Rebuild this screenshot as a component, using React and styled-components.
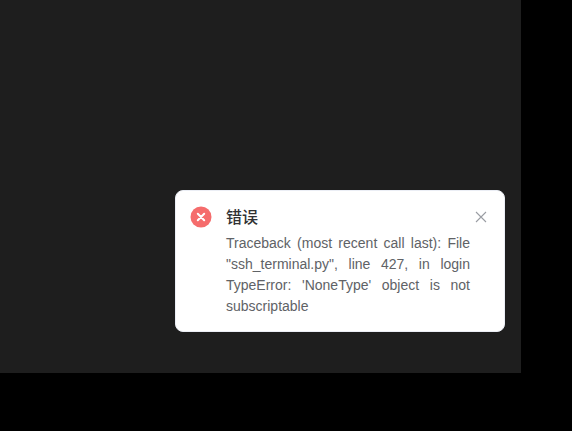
import React from "react";
import styled, { createGlobalStyle } from "styled-components";

const Global = createGlobalStyle`
  html, body { margin: 0; padding: 0; background: #000; }
  #root { width: 572px; height: 431px; overflow: hidden; }
`;

const Panel = styled.main`
  box-sizing: border-box;
  width: 521px;
  height: 373px;
  background: #1e1e1e;
  display: flex;
  justify-content: flex-end;
  align-items: flex-end;
  padding: 0 16px 41px 0;
`;

const Notification = styled.section`
  position: relative;
  box-sizing: border-box;
  width: 330px;
  height: 142px;
  display: flex;
  padding: 14px 26px 14px 13px;
  background: #fff;
  border: 1px solid #ebeef5;
  border-radius: 8px;
  font-family: "Liberation Sans", Arial, "Noto Sans CJK SC", sans-serif;
`;

const IconSlot = styled.div`
  flex: none;
  width: 24px;
  height: 24px;
  display: flex;
  align-items: center;
  justify-content: center;
`;

const Group = styled.div`
  flex: 1;
  min-width: 0;
  margin: 0 8px 0 13px;
`;

const Title = styled.h2`
  margin: 0;
  font-size: 16px;
  font-weight: 500;
  line-height: 22px;
  color: #303133;
  font-family: "Noto Sans CJK SC", sans-serif;
`;

const Message = styled.p`
  margin: 6px 0 0;
  font-size: 14px;
  line-height: 21px;
  color: #606266;
  text-align: justify;
`;

const Close = styled.button`
  position: absolute;
  top: 20px;
  right: 17px;
  width: 12px;
  height: 12px;
  padding: 0;
  border: 0;
  background: none;
  display: flex;
`;

export default function App() {
  return (
    <>
      <Global />
      <Panel>
        <Notification>
          <IconSlot>
            <svg width="22" height="22" viewBox="0 0 22 22">
              <circle cx="11" cy="11" r="10.5" fill="#f56c6c" />
              <path d="M7.8 7.8 14.2 14.2M14.2 7.8 7.8 14.2" stroke="#fff" strokeWidth="2" strokeLinecap="round" />
            </svg>
          </IconSlot>
          <Group>
            <Title>错误</Title>
            <Message>
              Traceback (most recent call last): File "ssh_terminal.py", line 427, in login TypeError: 'NoneType' object is not subscriptable
            </Message>
          </Group>
          <Close aria-label="关闭">
            <svg width="12" height="12" viewBox="0 0 12 12">
              <path d="M1 1 11 11M11 1 1 11" stroke="#9a9da3" strokeWidth="1.1" fill="none" />
            </svg>
          </Close>
        </Notification>
      </Panel>
    </>
  );
}
